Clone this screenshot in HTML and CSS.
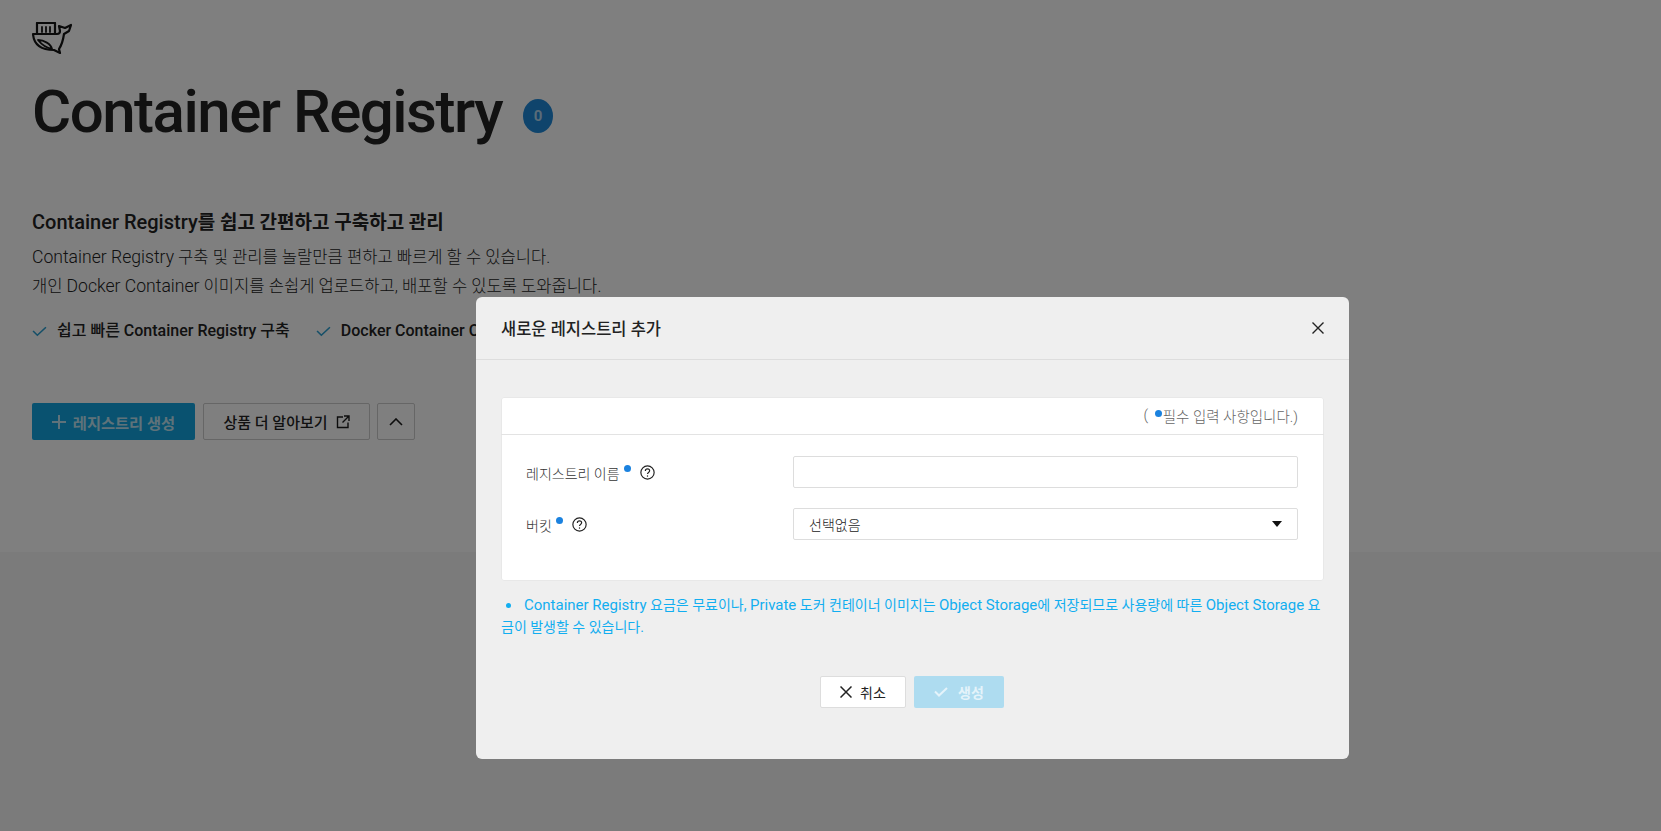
FILE: index.html
```html
<!DOCTYPE html>
<html lang="ko">
<head>
  <meta charset="UTF-8" />
  <title>Container Registry</title>
  <link rel="stylesheet" href="styles.css">
</head>
<body>
  <main class="page">
    <section class="intro">
      <svg class="logo" viewBox="0 0 40 32" width="40" height="32" fill="none" stroke="#141414" stroke-width="2.200" stroke-linejoin="round" stroke-linecap="round">
        <path d="M5 11V1h18v10"/>
        <path d="M10 5v5M14 5v5M18 5v5" stroke-width="1.800"/>
        <path d="M1 12h24c2 0 3-1 3-3l-1-5 6 2 6-3-2 6-5 3c-1 7-3 12-5 15l1 4-6-3C10 28 2 24 1 12z"/>
        <path d="M6 18c4 5 9 8 14 9-1-5-8-9-14-9z" stroke-width="1.800"/>
      </svg>
      <h1 class="title">Container Registry <span class="count">0</span></h1>
      <h2 class="lead"><span class="en">Container Registry</span>를 쉽고 간편하고 구축하고 관리</h2>
      <p class="desc"><span class="en">Container Registry</span> 구축 및 관리를 놀랄만큼 편하고 빠르게 할 수 있습니다.<br>개인 <span class="en">Docker Container</span> 이미지를 손쉽게 업로드하고, 배포할 수 있도록 도와줍니다.</p>
      <ul class="features">
        <li><svg viewBox="0 0 14 10" width="15" height="11" fill="none" stroke="#2b9fd0" stroke-width="1.500"><path d="M1 4.500 5 8.500 13 1"/></svg>쉽고 빠른 Container Registry 구축</li>
        <li><svg viewBox="0 0 14 10" width="15" height="11" fill="none" stroke="#2b9fd0" stroke-width="1.500"><path d="M1 4.500 5 8.500 13 1"/></svg>Docker Container CLI 지원</li>
      </ul>
      <div class="actions">
        <button class="btn btn-primary"><svg viewBox="0 0 14 14" width="14" height="14" fill="none" stroke="currentColor" stroke-width="2"><path d="M7 0v14M0 7h14"/></svg>레지스트리 생성</button>
        <button class="btn btn-outline">상품 더 알아보기<svg viewBox="0 0 14 14" width="14" height="14" fill="none" stroke="#1a1a1a" stroke-width="1.400"><path d="M7 2H1.500v10.500H12V7.500M8 1h5v5M13 1 6.500 7.500"/></svg></button>
        <button class="btn btn-icon"><svg viewBox="0 0 14 8" width="14" height="8" fill="none" stroke="#1a1a1a" stroke-width="1.600"><path d="M1 7 7 1l6 6"/></svg></button>
      </div>
    </section>
    <section class="lower"></section>
  </main>

  <div class="overlay">
    <div class="modal">
      <div class="modal-head">
        <h3>새로운 레지스트리 추가</h3>
        <svg viewBox="0 0 12 12" width="12" height="12" fill="none" stroke="#222" stroke-width="1.400"><path d="M.5.5l11 11M11.500.5l-11 11"/></svg>
      </div>
      <div class="modal-body">
        <div class="panel">
          <div class="panel-note">( <i class="dot"></i>필수 입력 사항입니다.)</div>
          <div class="panel-form">
            <div class="row">
              <label>레지스트리 이름<i class="dot dot-label"></i>
                <svg class="help" viewBox="0 0 14 14" width="15" height="15" fill="none" stroke="#222" stroke-width="1.100"><circle cx="7" cy="7" r="6.200"/><path d="M5 5.500C5 4.300 6 3.600 7 3.600s2 .7 2 1.800C9 7 7 6.900 7 8.500"/><path d="M7 9.700v1.200"/></svg>
              </label>
              <div class="field"></div>
            </div>
            <div class="row">
              <label>버킷<i class="dot dot-label"></i>
                <svg class="help" viewBox="0 0 14 14" width="15" height="15" fill="none" stroke="#222" stroke-width="1.100"><circle cx="7" cy="7" r="6.200"/><path d="M5 5.500C5 4.300 6 3.600 7 3.600s2 .7 2 1.800C9 7 7 6.900 7 8.500"/><path d="M7 9.700v1.200"/></svg>
              </label>
              <div class="field field-select">선택없음<i class="caret"></i></div>
            </div>
          </div>
        </div>
        <p class="notice"><i class="bullet"></i><span class="en">Container Registry</span> 요금은 무료이나, <span class="en">Private</span> 도커 컨테이너 이미지는 <span class="en">Object Storage</span>에 저장되므로 사용량에 따른 <span class="en">Object Storage</span> 요금이 발생할 수 있습니다.</p>
        <div class="modal-actions">
          <button class="btn-cancel"><svg viewBox="0 0 12 12" width="12" height="12" fill="none" stroke="#222" stroke-width="1.500"><path d="M.5.5l11 11M11.500.5l-11 11"/></svg>취소</button>
          <button class="btn-create"><svg viewBox="0 0 14 10" width="14" height="10" fill="none" stroke="#e4f3fa" stroke-width="2"><path d="M1 4.500 5 8.500 13 1"/></svg>생성</button>
        </div>
      </div>
    </div>
  </div>
</body>
</html>
```

FILE: styles.css
```css
* {
  box-sizing: border-box;
}
body {
  margin: 0;
  font-family: Roboto, "Noto Sans CJK KR", sans-serif;
  color: #222;
  background: #f6f6f6;
  height: 831px;
  overflow: hidden;
}
.intro {
  background: #fff;
  height: 552px;
  padding: 22px 32px 0;
}
.logo {
  display: block;
}
.title {
  margin: 20px 0 0;
  font-size: 60px;
  line-height: 76px;
  font-weight: 500;
  letter-spacing: -1.500px;
  color: #222;
  display: flex;
  align-items: center;
}
.count {
  margin-left: 21px;
  margin-top: 8px;
  width: 30px;
  height: 34px;
  border-radius: 50%;
  background: #1e88d9;
  color: #b5d8f0;
  font-size: 15px;
  font-weight: 700;
  letter-spacing: 0;
  line-height: 34px;
  text-align: center;
}
.lead {
  margin: 57px 0 0;
  font-size: 19px;
  line-height: 30px;
  font-weight: 700;
}
.lead .en {
  font-size: 20px;
  font-weight: 500;
}
.desc {
  margin: 5px 0 0;
  font-size: 16.600px;
  line-height: 28px;
  font-weight: 300;
}
.desc .en {
  font-size: 17.600px;
}
.features {
  list-style: none;
  margin: 18px 0 0;
  padding: 0;
  display: flex;
  gap: 26px;
  font-size: 16px;
  line-height: 24px;
  font-weight: 500;
}
.features li {
  display: flex;
  align-items: center;
  gap: 10px;
  white-space: nowrap;
}
.actions {
  margin-top: 60px;
  display: flex;
  gap: 8px;
}
.btn {
  height: 37px;
  border-radius: 2px;
  font-family: inherit;
  font-size: 15px;
  font-weight: 500;
  display: flex;
  align-items: center;
  justify-content: center;
}
.btn-primary {
  width: 163px;
  gap: 7px;
  border: 0;
  background: #12a5e0;
  color: #bfe4f4;
  font-size: 15.300px;
  font-weight: 700;
}
.btn-outline {
  width: 167px;
  gap: 8px;
  border: 1px solid #ccc;
  background: #fff;
  color: #222;
}
.btn-icon {
  width: 38px;
  margin-left: -1px;
  border: 1px solid #ccc;
  background: #fff;
}
.overlay {
  position: fixed;
  inset: 0;
  background: rgba(0, 0, 0, 0.5);
  padding: 297px 0 0 476px;
}
.modal {
  width: 873px;
  height: 462px;
  background: #efefef;
  border-radius: 6px;
}
.modal-head {
  height: 63px;
  padding: 0 25px;
  border-bottom: 1px solid #ddd;
  display: flex;
  align-items: center;
  justify-content: space-between;
}
.modal-head h3 {
  margin: 0;
  font-size: 16.500px;
  font-weight: 500;
}
.modal-body {
  padding: 37px 25px 0;
}
.panel {
  height: 184px;
  background: #fff;
  border-radius: 3px;
  box-shadow: 0 0 0 1px #e8e8e8 inset;
}
.panel-note {
  height: 38px;
  padding: 0 26px 0 0;
  border-bottom: 1px solid #e3e3e3;
  display: flex;
  align-items: center;
  justify-content: flex-end;
  white-space: pre;
  font-size: 14.500px;
  font-weight: 300;
  color: #666;
}
.dot {
  display: inline-block;
  width: 7px;
  height: 7px;
  border-radius: 50%;
  background: #1b82df;
  margin: 0 1px 5px 3px;
}
.panel-form {
  padding: 21px 26px 0 25px;
}
.row {
  display: flex;
  justify-content: space-between;
  align-items: center;
  margin-bottom: 20px;
}
.row label {
  padding-top: 1px;
  font-size: 14px;
  font-weight: 300;
  color: #333;
  display: flex;
  align-items: center;
}
.dot-label {
  margin: 0 0 9px 4px;
}
.help {
  margin-left: 9px;
}
.field {
  width: 505px;
  height: 32px;
  background: #fff;
  border: 1px solid #ddd;
  border-radius: 2px;
}
.field-select {
  padding: 0 15px 0 15px;
  font-size: 14px;
  font-weight: 300;
  color: #222;
  display: flex;
  align-items: center;
  justify-content: space-between;
}
.caret {
  width: 0;
  height: 0;
  border-left: 5px solid transparent;
  border-right: 5px solid transparent;
  border-top: 6px solid #111;
}
.notice {
  margin: 13px 0 0;
  font-size: 14px;
  line-height: 22px;
  color: #12aef0;
  font-weight: 400;
}
.notice .en {
  font-size: 15px;
}
.bullet {
  display: inline-block;
  width: 5px;
  height: 5px;
  border-radius: 50%;
  background: #12aef0;
  margin: 0 13px 2px 5px;
  vertical-align: middle;
}
.modal-actions {
  margin-top: 38px;
  padding-left: 319px;
  display: flex;
  gap: 8px;
}
.btn-cancel,
.btn-create {
  height: 32px;
  border-radius: 2px;
  font-family: inherit;
  font-size: 14px;
  display: flex;
  align-items: center;
  justify-content: center;
}
.btn-cancel {
  width: 86px;
  gap: 8px;
  background: #fff;
  border: 1px solid #ddd;
  color: #222;
  font-weight: 400;
}
.btn-create {
  width: 90px;
  gap: 10px;
  background: #aedcf0;
  border: 0;
  color: #e4f3fa;
  font-weight: 700;
}
```
